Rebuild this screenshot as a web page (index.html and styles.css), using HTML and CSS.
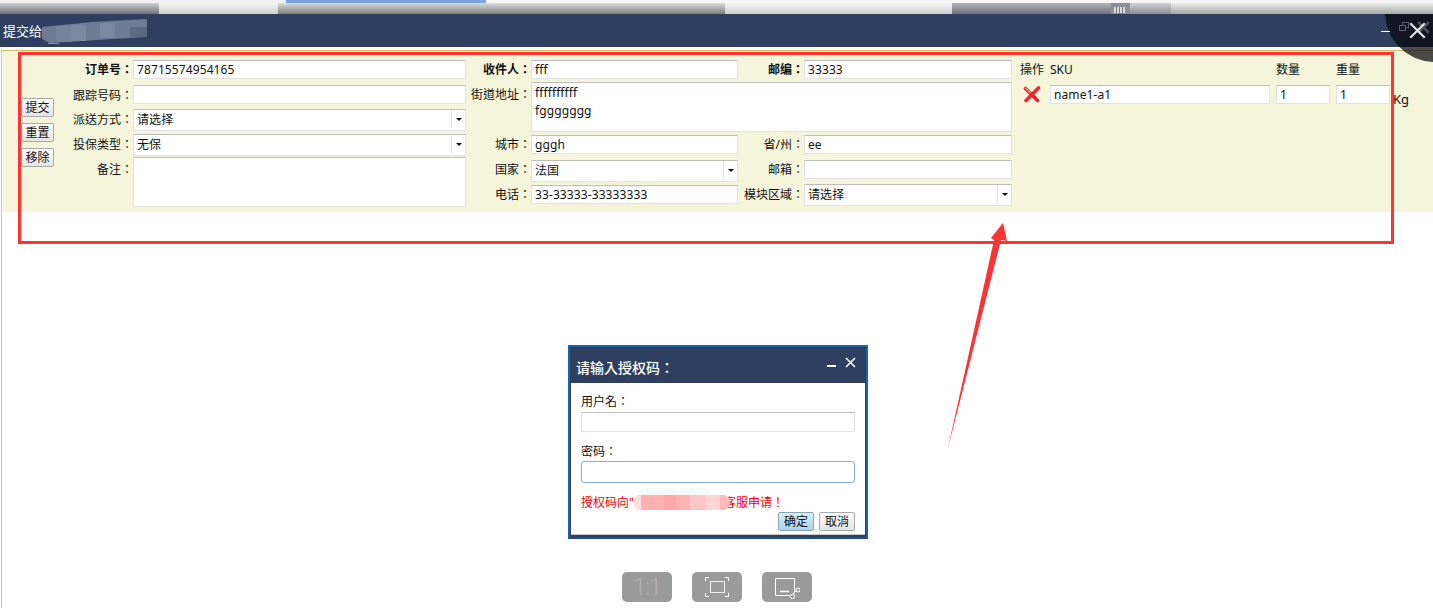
FILE: index.html
```html
<!DOCTYPE html>
<html lang="en">
<head>
    <meta charset="UTF-8">
    <meta name="viewport" content="width=device-width, initial-scale=1.0">
    <title>提交给</title>
    <link rel="stylesheet" href="styles.css">
</head>
<body>
    <div class="tabstrip">
        <div class="tab tab-grey"></div>
        <div class="tab tab-white"></div>
        <div class="tab tab-active"></div>
        <div class="tab tab-white2"></div>
        <div class="tab tab-dark"></div>
        <div class="tab tab-flag"></div>
        <div class="tab tab-mid"></div>
        <div class="tab tab-light"></div>
    </div>

    <div class="header">
        <div class="header-title">提交给</div>
        <svg class="title-blur" width="106" height="26" viewBox="0 0 106 26">
            <polygon points="0,8 20,6 50,3 105,0 105,18 70,20 40,22 8,24 0,20" fill="#6d7c93"/>
            <rect x="14" y="7" width="15" height="16" fill="#74849b"/>
            <rect x="29" y="6" width="15" height="16" fill="#7b899e"/>
            <rect x="58" y="4" width="15" height="15" fill="#7b899e"/>
            <rect x="88" y="8" width="17" height="10" fill="#5a6a82"/>
            <rect x="6" y="24" width="11" height="1" fill="#b98a80"/>
        </svg>
        <div class="header-tools">
            <span class="tool-min"></span>
            <svg class="tool-restore" width="12" height="12" viewBox="0 0 12 12" fill="none" stroke="#59606c">
                <rect x="4.5" y="1.5" width="6" height="5"/>
                <rect x="1.5" y="4.5" width="6" height="5" fill="#11192a"/>
            </svg>
        </div>
    </div>

    <div class="content">
        <div class="panel">
            <div class="side-buttons">
                <button class="btn">提交</button>
                <button class="btn">重置</button>
                <button class="btn">移除</button>
            </div>

            <div class="col-left">
                <label class="lbl bold">订单号：</label>
                <div class="field">78715574954165</div>
                <label class="lbl lbl-down">跟踪号码：</label>
                <div class="field"></div>
                <label class="lbl lbl-down">派送方式：</label>
                <div class="field select">请选择<span class="caret"></span></div>
                <label class="lbl lbl-down">投保类型：</label>
                <div class="field select">无保<span class="caret"></span></div>
                <label class="lbl lbl-note">备注：</label>
                <div class="field area"></div>
            </div>

            <div class="col-address">
                <label class="lbl bold">收件人：</label>
                <div class="field">fff</div>
                <label class="lbl bold">邮编：</label>
                <div class="field">33333</div>
                <label class="lbl lbl-street">街道地址：</label>
                <div class="field area wide">ffffffffff<br>fggggggg</div>
                <label class="lbl">城市：</label>
                <div class="field">gggh</div>
                <label class="lbl">省/州：</label>
                <div class="field">ee</div>
                <label class="lbl">国家：</label>
                <div class="field select">法国<span class="caret"></span></div>
                <label class="lbl">邮箱：</label>
                <div class="field"></div>
                <label class="lbl">电话：</label>
                <div class="field">33-33333-33333333</div>
                <label class="lbl">模块区域：</label>
                <div class="field select up">请选择<span class="caret"></span></div>
            </div>

            <div class="col-sku">
                <div class="lbl-head">操作</div>
                <div class="lbl-head">SKU</div>
                <div class="lbl-head">数量</div>
                <div class="lbl-head">重量</div>
                <div></div>
                <svg class="del-icon" width="18" height="17" viewBox="0 0 18 17" fill="none" stroke-linecap="round">
                    <path d="M2.5 2.5 L14.5 14.5" stroke="#ee2226" stroke-width="3.6"/>
                    <path d="M15.5 2 L3 14.5" stroke="#f5282c" stroke-width="3.6"/>
                    <path d="M2.5 2 L7 6.5" stroke="#ff8a8a" stroke-width="1.6"/>
                </svg>
                <div class="field">name1-a1</div>
                <div class="field">1</div>
                <div class="field">1</div>
                <div class="kg">Kg</div>
            </div>
        </div>

        <div class="stage">
            <div class="toolbar">
                <div class="tool-btn ratio">1:1</div>
                <div class="tool-btn">
                    <svg width="26" height="22" viewBox="0 0 26 22" fill="none" stroke="#fff">
                        <path d="M1.5 5 V1.5 H5 M21 1.5 H24.5 V5 M1.5 17 V20.5 H5 M21 20.5 H24.5 V17"/>
                        <rect x="6.5" y="5.5" width="14" height="11" stroke="#eee"/>
                    </svg>
                </div>
                <div class="tool-btn">
                    <svg width="26" height="24" viewBox="0 0 26 24" fill="none" stroke="#fff">
                        <path d="M16 20.5 H1.5 V3.5 H20.5 V17"/>
                        <path d="M6 16.5 H15" stroke-width="1.6"/>
                        <path d="M20.5 17 L19 19.5 M20.5 17 L23 15.5"/>
                        <circle cx="18.5" cy="21.5" r="2.2"/>
                        <circle cx="24" cy="15" r="2"/>
                    </svg>
                </div>
            </div>
        </div>
    </div>

    <div class="dialog">
        <div class="dialog-title">
            <span>请输入授权码：</span>
            <span class="dialog-tools">
                <span class="dialog-min"></span>
                <svg width="11" height="11" viewBox="0 0 11 11" stroke="#fff" stroke-width="1.6"><path d="M1 1 L10 10 M10 1 L1 10"/></svg>
            </span>
        </div>
        <div class="dialog-body">
            <div class="dialog-label">用户名：</div>
            <div class="dialog-input"></div>
            <div class="dialog-label second">密码：</div>
            <div class="dialog-input focus"></div>
            <div class="dialog-note">授权码向"<span class="note-blur"></span>客服申请！</div>
            <div class="dialog-actions">
                <button class="btn primary">确定</button>
                <button class="btn">取消</button>
            </div>
        </div>
    </div>

    <div class="lens">
        <svg class="lens-x" width="26" height="26" viewBox="0 0 26 26" stroke-linecap="square">
            <path d="M13 5 L22 14 M22 5 L13 14" stroke="#4c525c" stroke-width="2.5"/>
            <path d="M5 6 L18 19 M18 6 L5 19" stroke="#e2e2e2" stroke-width="2.2"/>
        </svg>
    </div>

    <div class="red-box"></div>
    <svg class="arrow" width="70" height="235" viewBox="0 0 70 235">
        <polygon points="0.5,228 47,18 44,16 56,1 60,19 54,18" fill="#ff3333"/>
    </svg>
</body>
</html>
```

FILE: styles.css
```css
* {
    box-sizing: border-box;
}
html, body {
    height: 100%;
}
body {
    margin: 0;
    overflow: hidden;
    background-color: #fff;
    color: #111;
    font-family: "Noto Sans", "Noto Sans CJK TC", sans-serif;
    font-size: 12px;
    display: flex;
    flex-direction: column;
}

/* strip of the window behind */
.tabstrip {
    height: 14px;
    flex-shrink: 0;
    display: flex;
    padding-top: 3px;
    background: linear-gradient(90deg, #f0f0f0 286px, #7ba3d9 286px, #7ba3d9 486px, #f6f6f6 486px);
}
.tab {
    height: 11px;
}
.tab-grey {
    width: 159px;
    background: linear-gradient(#cfcfcf, #70727a);
}
.tab-white {
    width: 119px;
    background: linear-gradient(#f4f4f4, #cfcfcf);
}
.tab-active {
    width: 447px;
    background: linear-gradient(#dcdcdc, #7d7d7d);
}
.tab-white2 {
    width: 227px;
    background: linear-gradient(#f4f4f4, #cfcfcf);
}
.tab-dark {
    width: 159px;
    background: linear-gradient(#b4b4b8, #70727c);
}
.tab-flag {
    width: 19px;
    background-color: #8d8f96;
    position: relative;
}
.tab-flag::after {
    content: "";
    position: absolute;
    left: 3px;
    top: 4px;
    width: 11px;
    height: 6px;
    background: repeating-linear-gradient(90deg, #dcdcdc 0 2px, #77797f 2px 3px);
}
.tab-mid {
    width: 41px;
    background: linear-gradient(#d0d0d0, #8f9096);
}
.tab-light {
    width: 262px;
    background: linear-gradient(#ececec, #a8a8a8);
}

.header {
    height: 33px;
    flex-shrink: 0;
    background-color: #2e3f5f;
    color: #fff;
    display: flex;
    align-items: center;
    padding-left: 3px;
}
.header-title {
    font-size: 13px;
    width: 39px;
}
.title-blur {
    margin-top: 2px;
    filter: blur(0.7px);
}
.header-tools {
    margin-left: auto;
    margin-right: 23px;
    display: flex;
    align-items: center;
    gap: 8px;
    position: relative;
    z-index: 3;
}
.tool-min {
    width: 9px;
    height: 1px;
    background-color: #fff;
    margin-top: 1px;
}
.tool-restore {
    margin-top: -8px;
}

.content {
    flex: 1;
    margin: 3px 0 0 1px;
    border-left: 1px solid #e0c27c;
    border-top: 1px solid #dcb95f;
    display: flex;
    flex-direction: column;
    min-height: 0;
}
.panel {
    height: 161px;
    flex-shrink: 0;
    margin-left: 1px;
    padding-left: 18px;
    background-color: #f5f5dc;
    display: flex;
    align-items: flex-start;
}
.side-buttons {
    width: 33px;
    margin-top: 47px;
    display: flex;
    flex-direction: column;
    gap: 6px;
}
.btn {
    font: inherit;
    color: #111;
    height: 19px;
    width: 33px;
    padding: 0;
    border: 1px solid #a9a9a9;
    border-radius: 2px;
    background: linear-gradient(#fff, #e4e4e4);
    line-height: 16px;
}
.btn.primary {
    background: linear-gradient(#d6ecf8, #a9d4ec);
    border-color: #8aa3b5;
}

.lbl {
    text-align: right;
    white-space: nowrap;
    line-height: 19px;
}
.bold {
    font-weight: 700;
}
.lbl-down {
    margin-top: 1px;
}
.lbl-note {
    margin-top: 3px;
}
.lbl-street {
    margin-top: 3px;
}
.field {
    height: 19px;
    background-color: #fff;
    border: 1px solid #e2e2e2;
    border-top-color: #bdbdbd;
    padding: 0 3px;
    line-height: 18px;
    letter-spacing: 0.1px;
    position: relative;
    white-space: nowrap;
}
.field.select {
    height: 22px;
    line-height: 20px;
}
.field.up {
    margin-top: -1px;
}
.caret {
    position: absolute;
    top: 0;
    right: 0;
    bottom: 2px;
    width: 14px;
    border-left: 1px solid #e2e2e2;
}
.caret::after {
    content: "";
    position: absolute;
    top: 8px;
    left: 4px;
    border: 3px solid transparent;
    border-top: 3px solid #111;
    border-bottom: 0;
}
.field.area {
    height: 50px;
    line-height: 18px;
    padding-top: 1px;
}
.field.wide {
    grid-column: 2 / -1;
}

.col-left {
    margin: 9px 0 0 19px;
    width: 393px;
    display: grid;
    grid-template-columns: 60px 333px;
    grid-template-rows: 25px 24px 25px 23px 50px;
}
.col-address {
    margin: 9px 0 0 1px;
    width: 545px;
    display: grid;
    grid-template-columns: 64px 207px 66px 208px;
    grid-template-rows: 22px 53px 25px 25px 22px;
}
.col-sku {
    margin: 9px 0 0 8px;
    display: grid;
    grid-template-columns: 24px 220px 54px 54px 30px;
    column-gap: 6px;
    grid-template-rows: 25px 19px;
}
.lbl-head {
    line-height: 19px;
    white-space: nowrap;
}
.del-icon {
    margin: 1px 0 0 3px;
}
.kg {
    font-size: 13px;
    margin: 5px 0 0 -3px;
    line-height: 18px;
}

.stage {
    flex: 1;
    padding-right: 1px;
    display: flex;
    flex-direction: column;
    justify-content: flex-end;
}
.toolbar {
    display: flex;
    justify-content: center;
    gap: 20px;
    padding-bottom: 6px;
}
.tool-btn {
    width: 50px;
    height: 30px;
    border-radius: 5px;
    background-color: #9a9a9a;
    color: #b4b4b4;
    display: flex;
    align-items: center;
    justify-content: center;
}
.ratio {
    font-size: 23px;
    font-weight: 300;
    letter-spacing: -1px;
    font-family: Roboto, sans-serif;
}

.dialog {
    position: absolute;
    left: 568px;
    top: 345px;
    width: 300px;
    height: 194px;
    background-color: #fff;
    border: 2px solid #1c62a6;
    border-bottom-color: #1d4f86;
    display: flex;
    flex-direction: column;
}
.dialog-title {
    height: 36px;
    flex-shrink: 0;
    background-color: #2e3f5f;
    color: #fff;
    font-size: 14px;
    font-weight: 500;
    display: flex;
    align-items: center;
    justify-content: space-between;
    padding: 3px 10px 0 6px;
}
.dialog-tools {
    display: flex;
    gap: 9px;
    align-items: center;
    margin-top: -8px;
}
.dialog-min {
    width: 9px;
    height: 2px;
    background-color: #fff;
    margin-top: 7px;
}
.dialog-body {
    flex: 1;
    padding: 10px 10px 0;
    border-left: 1px solid #2e3f5f;
    border-right: 1px solid #2e3f5f;
    border-bottom: 2px solid #2e3f5f;
    box-shadow: inset 0 -1px #c8c8c8;
}
.dialog-label {
    height: 18px;
    line-height: 18px;
    margin-bottom: 1px;
}
.dialog-label.second {
    margin-top: 11px;
    margin-bottom: 0;
}
.dialog-input {
    height: 20px;
    border: 1px solid #e4e4e8;
    border-top-color: #bdbdbd;
}
.dialog-input.focus {
    height: 22px;
    border: 1px solid #82b4da;
    border-radius: 3px;
}
.dialog-note {
    color: #f00;
    height: 16px;
    margin-top: 12px;
    line-height: 16px;
    white-space: nowrap;
    display: flex;
}
.note-blur {
    width: 96px;
    height: 15px;
    margin: 0 -6px 0 0;
    position: relative;
    background: linear-gradient(90deg, #ffdcdc 0 7px, #ffb0b0 7px 30px, #ffa8a8 30px 42px, #ffb4b4 42px 56px, #ffc6c6 56px 72px, #ffd4d4 72px 86px, #ffb8b8 86px);
    border-radius: 5px 7px 7px 6px;
}
.note-blur::before {
    content: "";
    position: absolute;
    left: 6px;
    right: 18px;
    top: -7px;
    height: 7px;
    background-color: #f4fafc;
    border-radius: 40px 40px 0 0;
}
.dialog-actions {
    display: flex;
    justify-content: flex-end;
    gap: 5px;
    margin-top: 1px;
}
.dialog-actions .btn {
    width: 36px;
}

/* the circle cut from the window corner, with the big close */
.lens {
    position: absolute;
    left: 1385px;
    top: 14px;
    width: 48px;
    height: 48px;
    overflow: hidden;
}
.lens::before {
    content: "";
    position: absolute;
    left: 0;
    top: -52px;
    width: 100px;
    height: 100px;
    border-radius: 50%;
    background-color: rgba(5, 5, 10, 0.72);
}
.lens-x {
    position: absolute;
    left: 21px;
    top: 4px;
}

.red-box {
    position: absolute;
    left: 18px;
    top: 52px;
    width: 1376px;
    height: 192px;
    border: 3px solid #ff3333;
}
.arrow {
    position: absolute;
    left: 947px;
    top: 222px;
}
```
